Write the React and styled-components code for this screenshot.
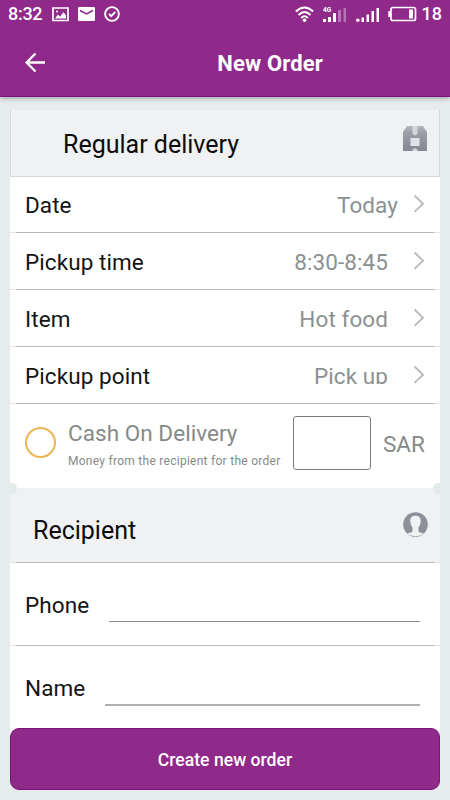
import React from "react";
import styled, { createGlobalStyle } from "styled-components";

const GlobalStyle = createGlobalStyle`
  * {
    box-sizing: border-box;
  }

  body {
    margin: 0;
    background: #e6eceb;
    font-family: Roboto, "Liberation Sans", sans-serif;
  }
`;

const Screen = styled.div`
  width: 450px;
  height: 800px;
  display: flex;
  flex-direction: column;
  overflow: hidden;
  background: #e6eceb;
`;

const Top = styled.header`
  height: 97px;
  flex-shrink: 0;
  background: #8f2a8b;
  color: #fff;
  border-bottom: 1px solid #7a1677;
  box-shadow: 0 1px 5px rgba(0, 0, 0, 0.35);
`;

const StatusBar = styled.div`
  height: 28px;
  display: flex;
  justify-content: space-between;
  padding: 0 8px;
  font-size: 18px;
  line-height: 28px;
  font-weight: 500;
`;

const StatusGroup = styled.div`
  display: flex;
  align-items: center;

  svg {
    display: block;
    margin-left: ${({ $gap }) => $gap}px;
  }
`;

const Clock = styled.span`
  width: 34px;
  letter-spacing: -0.3px;
`;

const Percent = styled.span`
  margin-left: 5px;
`;

const TitleBar = styled.div`
  height: 69px;
  display: flex;
  align-items: center;
  padding: 0 127px 0 25px;
  justify-content: space-between;
`;

const Title = styled.h1`
  margin: 1px 0 0;
  font-size: 22px;
  font-weight: 700;
  letter-spacing: 0.15px;
`;

const Form = styled.main`
  flex: 1;
  display: flex;
  flex-direction: column;
  margin: 13px 10px 0;
  background: #fff;
`;

const SectionHeader = styled.div`
  height: ${({ $height }) => $height}px;
  flex-shrink: 0;
  display: flex;
  justify-content: space-between;
  align-items: flex-start;
  padding: ${({ $pad }) => $pad};
  background: #eff1f2;
  font-size: 25px;
  line-height: 30px;
  color: #0c0c0c;
`;

const DeliveryHeader = styled(SectionHeader)`
  border: 1px solid #d3d8d8;
  border-top: none;
`;

const HeaderIcon = styled.div`
  margin-top: ${({ $top }) => $top}px;

  svg {
    display: block;
  }
`;

const Divider = styled.div`
  height: 1px;
  flex-shrink: 0;
  border: solid #e2e4e4;
  border-width: 0 6px;
  background: #b5b8b7;
`;

const Row = styled.div`
  height: ${({ $height }) => $height}px;
  flex-shrink: 0;
  display: flex;
  align-items: center;
  padding: ${({ $top = 2 }) => $top}px 15px 0;
  font-size: 22.5px;
  line-height: 26px;
  letter-spacing: 0.08px;
  color: #141414;

  > svg {
    margin-top: -3px;
  }
`;

const Value = styled.span`
  height: ${({ $clipped }) => ($clipped ? "21px" : "26px")};
  margin-bottom: ${({ $clipped }) => ($clipped ? "5px" : "0")};
  margin-left: auto;
  margin-right: ${({ $gap }) => $gap}px;
  overflow: hidden;
  color: #8b9190;
`;

const CashRow = styled.div`
  height: 84px;
  flex-shrink: 0;
  display: flex;
  padding: 12px 14px 0;
  color: #858a89;
`;

const Radio = styled.div`
  width: 31px;
  height: 31px;
  flex-shrink: 0;
  margin: 11px 0 0 1px;
  border: 2px solid #eab552;
  border-radius: 50%;
`;

const CashText = styled.div`
  width: 237px;
  flex-shrink: 0;
  padding: 4px 0 0 12px;
  white-space: nowrap;
`;

const CashTitle = styled.div`
  font-size: 22.5px;
  line-height: 26px;
  letter-spacing: 0.05px;
`;

const CashNote = styled.div`
  margin-top: 7px;
  font-size: 12px;
  line-height: 16px;
  letter-spacing: 0.27px;
`;

const Amount = styled.div`
  width: 78px;
  height: 54px;
  flex-shrink: 0;
  border: 1px solid #7b7f7e;
  border-radius: 3px;
`;

const Currency = styled.div`
  margin: 15px 0 0 12px;
  font-size: 22.5px;
  line-height: 26px;
`;

const Corners = styled.div`
  height: 0;
  display: flex;
  justify-content: space-between;
`;

// small notches where the two cards meet
const Notch = styled.div`
  width: 7px;
  height: 11px;
  margin-top: -5px;
  background: #e3eaea;
  border-radius: ${({ $right }) => ($right ? "6px 0 0 6px" : "0 6px 6px 0")};
  position: relative;
`;

const Underline = styled.div`
  flex: 1;
  height: ${({ $thick }) => ($thick ? 2 : 1)}px;
  margin: ${({ $thick }) => ($thick ? 34 : 33)}px 5px 0 20px;
  background: ${({ $thick }) => ($thick ? "#b0b0b0" : "#8b8b8b")};
`;

const Footer = styled.footer`
  height: 72px;
  flex-shrink: 0;
  padding: 0 10px 10px;
  background: linear-gradient(#fff 12px, #e6eceb 12px) 10px 0 / 430px 72px no-repeat;
`;

const SubmitButton = styled.button`
  display: block;
  width: 100%;
  height: 62px;
  padding: 1px 0 0;
  border: 1px solid #7a1677;
  border-radius: 9px;
  background: #8f2a8b;
  color: #fff;
  font-family: inherit;
  font-size: 17.6px;
  font-weight: 500;
`;

const ImageIcon = () => (
  <svg width="18" height="15" viewBox="-1 0 18 15">
    <path d="M1 1h15v12.5H1z" fill="none" stroke="#fff" strokeWidth="1.7" />
    <path d="M3 11.5l3-4 2 2.2L11.500 5 14 8.500v3z" fill="#fff" />
    <circle cx="5" cy="4.500" r="1" fill="#fff" />
  </svg>
);

const MailIcon = () => (
  <svg width="17" height="14" viewBox="0 0 17 14">
    <rect width="17" height="14" rx="1.3" fill="#fff" />
    <path d="M2 3.500l6.500 3.500L15 3.500" fill="none" stroke="#8f2a8b" strokeWidth="1.5" />
  </svg>
);

const CheckIcon = () => (
  <svg width="16" height="16" viewBox="0 0 16 16" fill="none" stroke="#fff">
    <circle cx="8" cy="8" r="6.900" strokeWidth="1.900" />
    <path d="M5 7.800l2.200 2.300L11.200 6" strokeWidth="1.900" />
  </svg>
);

const WifiIcon = () => (
  <svg width="19" height="17" viewBox="0 0 19 17" fill="none" stroke="#fff" strokeWidth="1.900">
    <path d="M.8 5.500Q9.500-2.500 18.200 5.500M3.500 9Q9.500 3 15.500 9M6.200 12Q9.500 8.700 12.800 12" />
    <circle cx="9.500" cy="14.300" r="1.800" fill="#fff" stroke="none" />
  </svg>
);

const MobileDataIcon = () => (
  <svg width="24" height="17" viewBox="0 0 24 17" fill="#fff">
    <text x="0" y="6" fontSize="6.5" fontWeight="700" fontFamily="Roboto, sans-serif">
      4G
    </text>
    <path d="M0 13h3v3H0zM5 11h3v5H5zM10 7h3v9h-3z" />
    <path d="M15 4h3v12h-3zM20.500 2h2.500v14h-2.500z" opacity=".35" />
  </svg>
);

const SignalIcon = () => (
  <svg width="23" height="17" viewBox="0 0 23 17" fill="#fff">
    <circle cx="1.800" cy="14.200" r="1.800" />
    <path d="M5.500 11.500h2.500v4.500H5.500zM10.500 8.500h2.500v7.500h-2.500zM15.500 5h2.500v11h-2.500zM20.500 2h2.500v14h-2.500z" />
  </svg>
);

const BatteryIcon = () => (
  <svg width="29" height="16" viewBox="0 0 29 16">
    <path
      d="M5 1.500h20.500q2 0 2 2v9q0 2-2 2H5q-2 0-2-2v-9q0-2 2-2z"
      fill="none"
      stroke="#fff"
      strokeWidth="1.700"
    />
    <path d="M.3 5H3v6H.3zM21 3.500h4v9h-4z" fill="#fff" />
  </svg>
);

const BackIcon = () => (
  <svg width="20" height="20" viewBox="0 0 20 20" fill="none" stroke="#fff" strokeWidth="2.300">
    <path d="M20 9.500H2M10.500 .5L1.600 9.500l8.900 9" />
  </svg>
);

const Chevron = () => (
  <svg width="12" height="20" viewBox="0 0 12 20">
    <path d="M1.500 1.500L10 9.700l-8.500 8.200" fill="none" stroke="#babdbd" strokeWidth="2" />
  </svg>
);

const PackageIcon = () => (
  <svg width="24" height="25" viewBox="0 0 24 25">
    <defs>
      <linearGradient id="box" x1="0" x2="0" y1="0" y2="1">
        <stop offset="0" stopColor="#b4b5bb" />
        <stop offset=".3" stopColor="#9c9ea5" />
        <stop offset="1" stopColor="#858890" />
      </linearGradient>
    </defs>
    <path d="M4 0h16l4 6v19H0V6z" fill="url(#box)" />
    <path d="M9.500 0h5v8l-2.500 1.500L9.500 8z" fill="#d3d5d9" />
    <path d="M7.500 12h9v8h-9z" fill="#dfe2e6" />
    <path d="M9.500 25v-1.500L12 22l2.500 1.500V25z" fill="#d5d8dc" />
  </svg>
);

const PersonIcon = () => (
  <svg width="25" height="25" viewBox="0 0 25 25">
    <circle cx="12.500" cy="12.500" r="12.300" fill="#8b9099" />
    <path
      d="M12.500 3.800c3.600 0 5.400 2 5.200 5.200 0 3-1 5-2.200 6.500v3.700c.8 1.500 3.500 1.500 5.300 2.300-2.300 1.900-5.200 2.700-8.300 2.700s-6-.8-8.300-2.700c1.800-.8 4.500-.8 5.300-2.300v-3.700C8.300 14 7.300 12 7.300 9c-.2-3.200 1.600-5.200 5.200-5.200z"
      fill="#eff1f2"
    />
  </svg>
);

const rows = [
  { label: "Date", value: "Today", height: 55, gap: 15, top: 1 },
  { label: "Pickup time", value: "8:30-8:45", height: 56, gap: 25 },
  { label: "Item", value: "Hot food", height: 56, gap: 25 },
  { label: "Pickup point", value: "Pick up", height: 56, gap: 25, clipped: true },
];

const App = () => {
  return (
    <>
      <GlobalStyle />
      <Screen>
        <Top>
          <StatusBar>
            <StatusGroup $gap={9}>
              <Clock>8:32</Clock>
              <ImageIcon />
              <MailIcon />
              <CheckIcon />
            </StatusGroup>
            <StatusGroup $gap={9}>
              <WifiIcon />
              <MobileDataIcon />
              <SignalIcon />
              <BatteryIcon />
              <Percent>18</Percent>
            </StatusGroup>
          </StatusBar>
          <TitleBar>
            <BackIcon />
            <Title>New Order</Title>
          </TitleBar>
        </Top>

        <Form>
          <DeliveryHeader $height={67} $pad="20px 12px 0 52px">
            <span>Regular delivery</span>
            <HeaderIcon $top={-4}>
              <PackageIcon />
            </HeaderIcon>
          </DeliveryHeader>

          {rows.map(({ label, value, height, gap, top, clipped }) => (
            <React.Fragment key={label}>
              <Row $height={height} $top={top}>
                <span>{label}</span>
                <Value $gap={gap} $clipped={clipped}>
                  {value}
                </Value>
                <Chevron />
              </Row>
              <Divider />
            </React.Fragment>
          ))}

          <CashRow>
            <Radio />
            <CashText>
              <CashTitle>Cash On Delivery</CashTitle>
              <CashNote>Money from the recipient for the order</CashNote>
            </CashText>
            <Amount />
            <Currency>SAR</Currency>
          </CashRow>

          <Corners>
            <Notch />
            <Notch $right />
          </Corners>

          <SectionHeader $height={74} $pad="28px 12px 0 23px">
            <span>Recipient</span>
            <HeaderIcon $top={-4}>
              <PersonIcon />
            </HeaderIcon>
          </SectionHeader>
          <Divider />
          <Row $height={82}>
            <span>Phone</span>
            <Underline />
          </Row>
          <Divider />
          <Row $height={82}>
            <span>Name</span>
            <Underline $thick />
          </Row>
        </Form>

        <Footer>
          <SubmitButton>Create new order</SubmitButton>
        </Footer>
      </Screen>
    </>
  );
};

export default App;
